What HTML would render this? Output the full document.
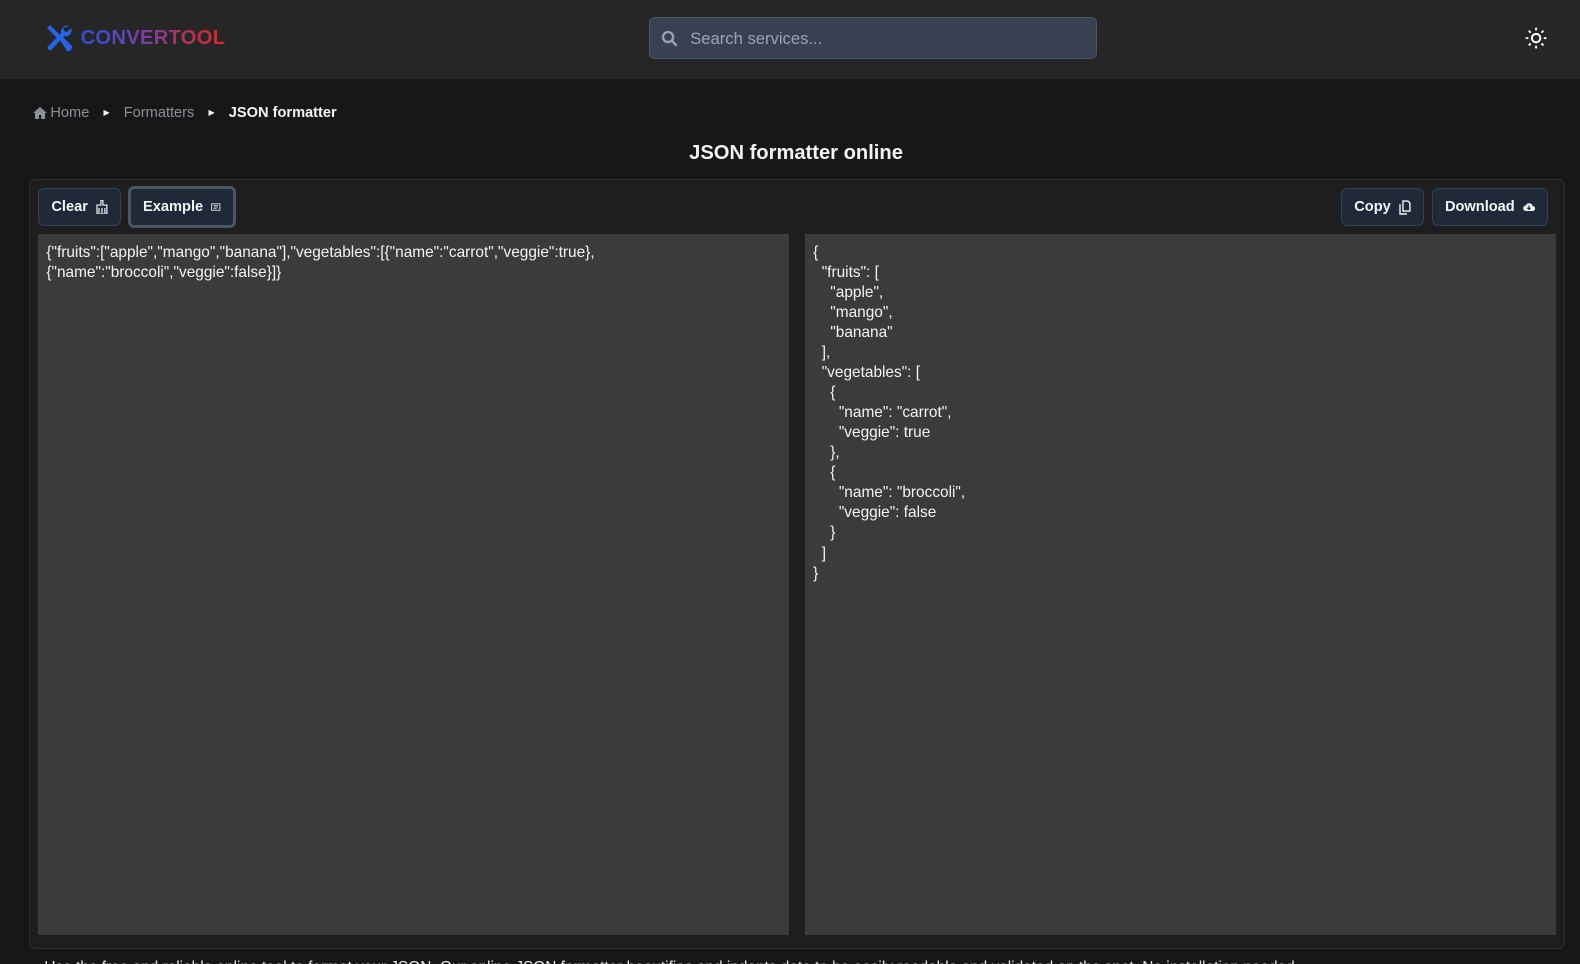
<!DOCTYPE html>
<html><head><meta charset="utf-8"><style>
*{box-sizing:border-box;margin:0;padding:0}
html,body{width:1580px;height:964px;overflow:hidden;background:#171717}
body{font-family:"Liberation Sans",sans-serif;color:#e5e7eb;position:relative}
.wrap{position:absolute;left:0;top:0;width:1568px;height:957px;zoom:1.00765}
.hdr{position:absolute;left:0;top:0;width:1600px;height:78px;background:#262626}
.logo{position:absolute;left:44px;top:23px;display:flex;align-items:center}
.logo span{font-weight:bold;font-size:20px;margin-left:6px;background:linear-gradient(90deg,#2f4fd6,#7b3fa0 45%,#dc2626);-webkit-background-clip:text;color:transparent;letter-spacing:0.3px}
.search{position:absolute;left:644px;top:17px;width:445px;height:42px;background:#374151;border:1px solid #4b5563;border-radius:6px}
.search .t{position:absolute;left:40px;top:11px;font-size:16.5px;color:#9ca3af}
.bc{position:absolute;left:33px;top:104px;font-size:14.5px;color:#8b8f96;display:flex;align-items:center}
.bc b{color:#f3f4f6}
h1{position:absolute;left:0;width:1580px;top:141px;text-align:center;font-size:20px;color:#f3f4f6}
.panel{position:absolute;left:29px;top:178px;width:1524px;height:764px;background:#1e1e1e;border:1px solid #2c2f35;border-radius:6px}
.btn{position:absolute;height:37px;background:#1f2937;border:1px solid #334155;border-radius:6px;font-size:14.5px;font-weight:bold;color:#f3f4f6;display:flex;align-items:center;padding:0 12px;gap:8px}
.ta{position:absolute;top:232px;height:696px;width:745px;background:#3b3b3b;font-size:15.3px;line-height:19.9px;color:#f3f4f6;padding:9px 8px;white-space:pre}
</style></head><body><div class="wrap">
<div class="hdr">
 <div class="logo"><svg width="30" height="30" viewBox="0 0 30 30"><g fill="#2563eb"><path d="M3 5l3-3 10 10-3 3z"/><path d="M16 17l3-3 9 9-1 4-4 1z"/><path d="M25 3a6 6 0 0 0-8 7L4 23a2.5 2.5 0 0 0 3.5 3.5L20 13a6 6 0 0 0 7-8l-4 4-3-1-1-3z"/></g></svg><span>CONVERTOOL</span></div>
 <div class="search"><svg style="position:absolute;left:11px;top:12px" width="17" height="17" viewBox="0 0 17 17"><circle cx="7" cy="7" r="5" stroke="#9ca3af" stroke-width="2.3" fill="none"/><path d="M11 11l4.5 4.5" stroke="#9ca3af" stroke-width="2.5"/></svg><div class="t">Search services...</div></div>
 <svg style="position:absolute;left:1513px;top:27px" width="22" height="22" viewBox="0 0 22 22"><circle cx="11" cy="11" r="4.2" stroke="#fff" stroke-width="2" fill="none"/><g stroke="#fff" stroke-width="2" stroke-linecap="round"><path d="M11 1.5v1M11 19.5v1M1.5 11h1M19.5 11h1M4.3 4.3l.7.7M17 17l.7.7M4.3 17.7l.7-.7M17 5l.7-.7"/></g></svg>
</div>
<div class="bc"><svg width="14" height="12" viewBox="0 0 14 12"><path d="M7 0L0 6h2v6h4V8h2v4h4V6h2z" fill="#8b8f96"/></svg><span style="margin-left:3px">Home</span><span style="margin:0 14px;font-size:8px;color:#fff">▶</span><span>Formatters</span><span style="margin:0 14px;font-size:8px;color:#fff">▶</span><b>JSON formatter</b></div>
<h1>JSON formatter online</h1>
<div class="panel"></div>
<div class="btn" style="left:38px;top:187px;width:82px">Clear <svg width="12" height="14" viewBox="0 0 12 14"><path d="M5 0h2v5h4v9H1V5h4z M3 8v5M6 8v5M9 8v5" stroke="#f3f4f6" stroke-width="1.2" fill="none"/></svg></div>
<div class="btn" style="left:127px;top:185px;width:107px;height:41px;border:3px solid #4b5563">Example <svg width="15" height="12" viewBox="0 0 15 12"><rect x="1" y="1" width="13" height="10" stroke="#f3f4f6" stroke-width="1.3" fill="none"/><path d="M4 4h7M4 6h7M4 8h5" stroke="#f3f4f6" stroke-width="1.1"/></svg></div>
<div class="btn" style="left:1331px;top:187px;width:82px">Copy <svg width="12" height="15" viewBox="0 0 12 15"><path d="M4 1h5l2 2v8H4z M1 4v10h7" stroke="#f3f4f6" stroke-width="1.4" fill="none"/></svg></div>
<div class="btn" style="left:1421px;top:187px;width:115px">Download <svg width="15" height="12" viewBox="0 0 15 12"><path d="M4 11a3.5 3.5 0 0 1-.5-7A4.5 4.5 0 0 1 12 4.5 3.2 3.2 0 0 1 12 11z" fill="#f3f4f6"/><path d="M7.5 4v5M5.5 7l2 2 2-2" stroke="#1f2937" stroke-width="1.5" fill="none"/></svg></div>
<div class="ta" style="left:38px">{"fruits":["apple","mango","banana"],"vegetables":[{"name":"carrot","veggie":true},
{"name":"broccoli","veggie":false}]}</div>
<div class="ta" style="left:799px">{
  "fruits": [
    "apple",
    "mango",
    "banana"
  ],
  "vegetables": [
    {
      "name": "carrot",
      "veggie": true
    },
    {
      "name": "broccoli",
      "veggie": false
    }
  ]
}</div>
<div style="position:absolute;left:44px;top:952px;font-size:15.3px;color:#e5e7eb;white-space:nowrap">Use the free and reliable online tool to format your JSON. Our online JSON formatter beautifies and indents data to be easily readable and validated on the spot. No installation needed.</div>
</div></body></html>
